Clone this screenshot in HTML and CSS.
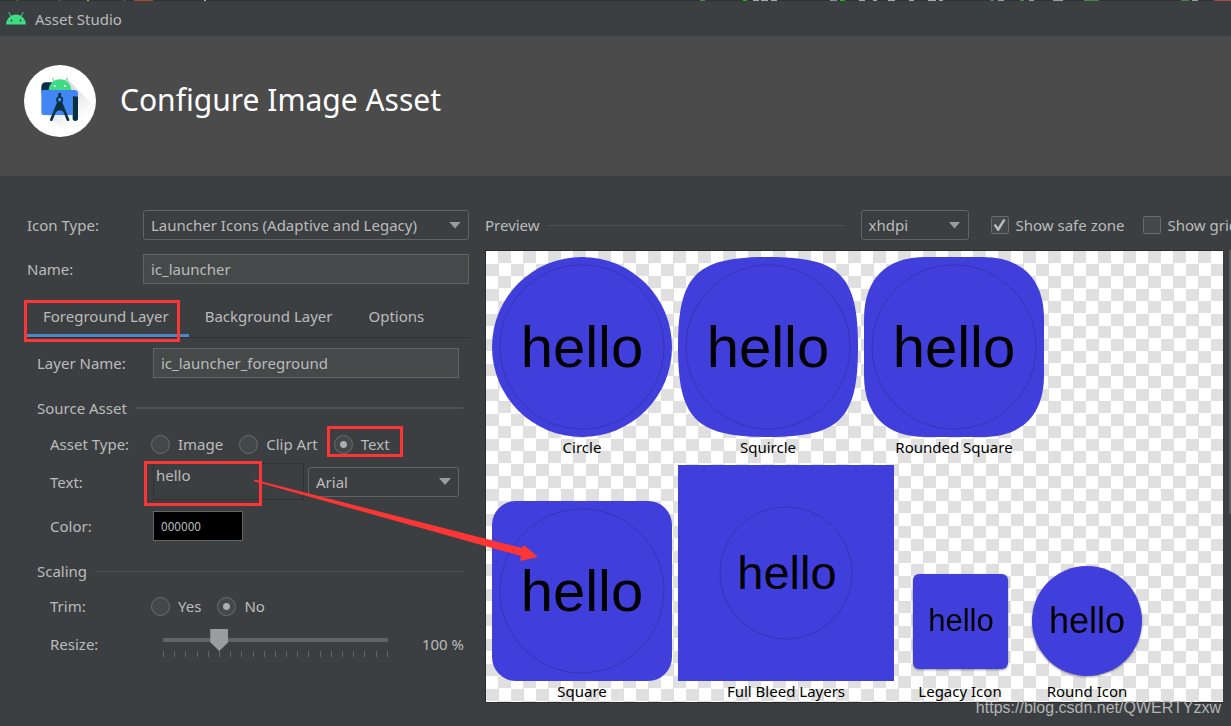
FILE: index.html
```
<!DOCTYPE html>
<html lang="en">
<head>
<meta charset="utf-8">
<title>Asset Studio</title>
<link rel="stylesheet" href="styles.css">
</head>
<body>
<div class="window">
  <svg class="backdrop-edge" height="1" aria-hidden="true">
    <rect x="17" width="1" height="1" fill="#77797b"/><rect x="59" width="1" height="1" fill="#77797b"/>
    <rect x="87" width="2" height="1" fill="#c9a06c"/><rect x="124" width="1" height="1" fill="#77797b"/>
    <rect x="134" width="19" height="1" fill="#a8491f"/><rect x="204" width="2" height="1" fill="#b5b7b8"/>
    <rect x="700" width="5" height="1" fill="#3c8a46"/><rect x="743" width="4" height="1" fill="#00c800"/>
    <rect x="753" width="6" height="1" fill="#a7a9aa"/><rect x="761" width="7" height="1" fill="#a7a9aa"/>
    <rect x="771" width="6" height="1" fill="#a7a9aa"/><rect x="830" width="7" height="1" fill="#8394a0"/>
    <rect x="840" width="5" height="1" fill="#00c800"/><rect x="859" width="6" height="1" fill="#a7a9aa"/>
    <rect x="873" width="4" height="1" fill="#a7a9aa"/><rect x="888" width="7" height="1" fill="#a7a9aa"/>
    <rect x="909" width="5" height="1" fill="#a7a9aa"/><rect x="928" width="8" height="1" fill="#a7a9aa"/>
    <rect x="939" width="4" height="1" fill="#a7a9aa"/><rect x="990" width="4" height="1" fill="#3c8a46"/>
    <rect x="998" width="6" height="1" fill="#9a9c9d"/><rect x="1020" width="4" height="1" fill="#3c8a46"/>
    <rect x="1029" width="5" height="1" fill="#9a9c9d"/><rect x="1053" width="10" height="1" fill="#9a9c9d"/>
    <rect x="1084" width="15" height="1" fill="#3c8a46"/><rect x="1181" width="8" height="1" fill="#3c8a46"/>
    <rect x="1192" width="6" height="1" fill="#9a9c9d"/><rect x="1214" width="17" height="1" fill="#b04545"/>
  </svg>

  <div class="titlebar">
    <svg class="titlebar-icon" viewBox="0 0 20 13" aria-hidden="true">
      <path d="M0 12.500C.3 7 4.500 2.500 10 2.500S19.700 7 20 12.500Z" fill="#3ddc84"/>
      <path d="M5 4.500 2.900.7M15 4.500 17.100.7" stroke="#3ddc84" stroke-linecap="round"/>
      <circle cx="5.500" cy="8.500" r=".9" fill="#3c3f41"/><circle cx="14.500" cy="8.500" r=".9" fill="#3c3f41"/>
    </svg>
    <span>Asset Studio</span>
  </div>

  <header class="banner">
    <svg class="logo" viewBox="0 0 216 216" aria-hidden="true">
      <defs>
        <linearGradient id="shade" gradientUnits="userSpaceOnUse" x1="100" y1="60" x2="175" y2="165">
          <stop offset="0" stop-color="#d4d4d4"/><stop offset="1" stop-color="#fff"/>
        </linearGradient>
      </defs>
      <circle cx="108" cy="108" r="108" fill="#fff"/>
      <path d="M130 42 207 119A100 100 0 0 1 125 205L70 150 110 80Z" fill="url(#shade)"/>
      <path d="M52 84V66Q52 52 66 52H94V75H62Z" fill="#073042"/>
      <path d="M52 75H150Q162 75 162 87V93H146V150H58Q52 150 52 144Z" fill="#4285f4"/>
      <path d="M146 96Q146 84 162 84V160Q162 168 154 168T146 160Z" fill="#073042"/>
      <path d="M162 95V86Q162 75 148 75H138V92Z" fill="#4285f4"/>
      <path d="M74 75C75 56 90 43 108 43S141 56 142 75Z" fill="#3ddc84"/>
      <path d="M91 50 85 39M124 50 130 39" stroke="#3ddc84" stroke-width="3" stroke-linecap="round"/>
      <circle cx="92" cy="63" r="3" fill="#fff"/><circle cx="123" cy="63" r="3" fill="#fff"/>
      <path d="M107 87V95M103 113 82 164M111 113 132 164" stroke="#073042" stroke-width="8" stroke-linecap="round"/>
      <path d="M107 108 92 144Q107 128 122 144Z" fill="#073042"/>
      <circle cx="107" cy="104" r="8" fill="#4285f4" stroke="#073042" stroke-width="5"/>
    </svg>
    <h1>Configure Image Asset</h1>
  </header>

  <main class="content">
    <form class="settings">
      <div class="row">
        <label for="icon-type">Icon Type:</label>
        <span class="select"><select id="icon-type"><option>Launcher Icons (Adaptive and Legacy)</option></select></span>
      </div>
      <div class="row row-name">
        <label for="name">Name:</label>
        <input class="field" id="name" type="text" value="ic_launcher">
      </div>

      <div class="tabs" role="tablist">
        <button class="tab tab-active" type="button" role="tab" aria-selected="true">Foreground Layer</button>
        <button class="tab" type="button" role="tab" aria-selected="false">Background Layer</button>
        <button class="tab" type="button" role="tab" aria-selected="false">Options</button>
      </div>

      <div class="layer">
        <div class="row">
          <label for="layer-name">Layer Name:</label>
          <input class="field" id="layer-name" type="text" value="ic_launcher_foreground">
        </div>

        <h2 class="legend legend-strong">Source Asset</h2>
        <div class="group">
          <div class="row row-asset">
            <span>Asset Type:</span>
            <div class="choices">
              <label><input type="radio" name="asset">Image</label>
              <label><input type="radio" name="asset">Clip Art</label>
              <label><input type="radio" name="asset" checked>Text</label>
            </div>
          </div>
          <div class="row row-text">
            <label for="text">Text:</label>
            <div class="pair">
              <textarea id="text" rows="1">hello</textarea>
              <span class="select"><select aria-label="Font"><option>Arial</option></select></span>
            </div>
          </div>
          <div class="row row-color">
            <label for="color">Color:</label>
            <input class="swatch" id="color" type="text" value="000000">
          </div>
        </div>

        <h2 class="legend">Scaling</h2>
        <div class="group">
          <div class="row row-trim">
            <span>Trim:</span>
            <div class="choices">
              <label><input type="radio" name="trim">Yes</label>
              <label><input type="radio" name="trim" checked>No</label>
            </div>
          </div>
          <div class="row row-resize">
            <label for="resize">Resize:</label>
            <div class="resize">
              <div class="slider">
                <input id="resize" type="range" min="0" max="400" value="100">
                <div class="ticks"><i></i><i></i><i></i><i></i><i></i><i></i><i></i><i></i><i></i><i></i><i></i><i></i><i></i><i></i><i></i><i></i><i></i><i></i><i></i><i></i><i></i></div>
              </div>
              <output for="resize">100 %</output>
            </div>
          </div>
        </div>
      </div>
    </form>

    <section class="preview">
      <div class="preview-bar">
        <h2 class="legend">Preview</h2>
        <span class="select select-density"><select aria-label="Density"><option>xhdpi</option></select></span>
        <label class="check"><input type="checkbox" checked>Show safe zone</label>
        <label class="check"><input type="checkbox">Show grid</label>
      </div>
      <div class="preview-body">
        <div class="canvas">
          <div class="shelf">
            <figure>
              <svg class="icon" viewBox="0 0 180 180"><circle cx="90" cy="90" r="90"/><circle class="zone" cx="90" cy="90" r="82"/><text x="90" y="110">hello</text></svg>
              <figcaption>Circle</figcaption>
            </figure>
            <figure>
              <svg class="icon" viewBox="0 0 180 180"><path d="M90 0C18 0 0 18 0 90S18 180 90 180 180 162 180 90 162 0 90 0Z"/><circle class="zone" cx="90" cy="90" r="82"/><text x="90" y="110">hello</text></svg>
              <figcaption>Squircle</figcaption>
            </figure>
            <figure>
              <svg class="icon" viewBox="0 0 180 180"><path d="M62 0H118C158 0 180 22 180 62V118C180 158 158 180 118 180H62C22 180 0 158 0 118V62C0 22 22 0 62 0Z"/><circle class="zone" cx="90" cy="90" r="82"/><text x="90" y="110">hello</text></svg>
              <figcaption>Rounded Square</figcaption>
            </figure>
          </div>
          <div class="shelf">
            <figure>
              <svg class="icon" viewBox="0 0 180 180"><rect width="180" height="180" rx="24"/><circle class="zone" cx="90" cy="90" r="82"/><text x="90" y="110">hello</text></svg>
              <figcaption>Square</figcaption>
            </figure>
            <figure>
              <svg class="icon icon-bleed" viewBox="0 0 216 216"><rect width="216" height="216"/><circle class="zone" cx="108" cy="108" r="66"/><text x="109" y="124">hello</text></svg>
              <figcaption>Full Bleed Layers</figcaption>
            </figure>
            <figure>
              <svg class="icon icon-legacy" viewBox="0 0 120 120"><rect x="13" y="13" width="95" height="95" rx="6"/><text x="61" y="70">hello</text></svg>
              <figcaption>Legacy Icon</figcaption>
            </figure>
            <figure>
              <svg class="icon icon-round" viewBox="0 0 122 122"><circle cx="61" cy="62" r="55"/><text x="61" y="74">hello</text></svg>
              <figcaption>Round Icon</figcaption>
            </figure>
          </div>
        </div>
        <div class="scrollbar"></div>
      </div>
    </section>
  </main>

  <svg class="marks" width="560" height="580" aria-hidden="true">
    <g fill="none" stroke="#fc3535" stroke-width="3">
      <rect x="25.500" y="301.500" width="153" height="39"/>
      <rect x="328.500" y="427.500" width="73" height="28"/>
      <rect x="145.500" y="462.500" width="115" height="42"/>
    </g>
    <path d="M254 479.500 522 548 524 545 538 557 520 561 521 556 254 481.200Z" fill="#fc3535"/>
  </svg>
  <div class="watermark">https://blog.csdn.net/QWERTYzxw</div>
</div>
</body>
</html>
```
FILE: styles.css
```
* { box-sizing: border-box; }

body {
  margin: 0;
  background: #3c3f41;
  color: #bbbbbb;
  font: 15px/22px "Noto Sans", "Open Sans", sans-serif;
}

h1, h2, figure { margin: 0; font-weight: 400; }

input, select, textarea, button {
  margin: 0;
  color: inherit;
  font: inherit;
}

.window {
  position: relative;
  display: flex;
  flex-direction: column;
  min-height: 100vh;
  overflow: hidden;
  border-bottom: 1px solid #35383a;
}

.backdrop-edge { display: block; width: 100%; background: #2f3234; }

.titlebar {
  display: flex;
  align-items: center;
  gap: 9px;
  height: 35px;
  padding: 0 6px;
}
.titlebar-icon { width: 20px; height: 13px; }

.banner {
  display: flex;
  align-items: center;
  gap: 24px;
  height: 140px;
  padding: 0 24px 10px;
  background: #4b4b4b;
  color: #fff;
}
.banner h1 { padding-bottom: 2px; font-size: 30px; line-height: 44px; }
.logo { width: 72px; height: 72px; }

.content {
  display: grid;
  grid-template-columns: 443px minmax(0, 1fr);
  gap: 15px;
  padding: 34px 0 23px 27px;
}

/* Form rows */
.row {
  display: grid;
  grid-template-columns: 116px minmax(0, 1fr);
  align-items: center;
}
.row-name { margin-top: 14px; }
.settings > .row { padding-right: 1px; }

.field {
  width: 100%;
  height: 30px;
  padding: 0 7px;
  border: 1px solid #646464;
  background: #45494a;
}

.select { display: grid; align-items: center; }
.select select {
  grid-area: 1 / 1;
  width: 100%;
  height: 30px;
  padding: 0 7px;
  appearance: none;
  border: 1px solid #646464;
  border-radius: 3px;
  background: #3c3f41;
}
.select::after {
  content: "";
  grid-area: 1 / 1;
  justify-self: end;
  width: 12px;
  height: 7px;
  margin-right: 8px;
  background: #9a9da0;
  clip-path: polygon(0 0, 100% 0, 50% 100%);
  pointer-events: none;
}

.tabs {
  display: flex;
  margin-top: 16px;
  border-bottom: 1px solid #323232;
}
.tab {
  height: 37px;
  padding: 0 20px 2px 16px;
  border: 0;
  border-bottom: 3px solid transparent;
  background: none;
}
.tab-active { border-bottom-color: #4a88c7; }

.layer { padding: 10px 11px 0 10px; }

.legend {
  display: flex;
  align-items: center;
  gap: 8px;
  margin: 19px -4px 0 0;
  font-size: 15px;
}
.legend::after {
  content: "";
  flex: 1;
  height: 1px;
  background: #515151;
}
.legend-strong::after { height: 2px; }

.group { padding-left: 13px; }
.group .row { grid-template-columns: 103px minmax(0, 1fr); }

.group .row-asset { margin-top: 14px; }
.group .row-text { margin-top: 8px; }
.group .row-color { margin-top: 11px; }
.group .row-trim { margin-top: 13px; }
.group .row-resize { margin-top: 12px; }

.choices { display: flex; gap: 16px; margin-left: -2px; }
.choices label { display: flex; align-items: center; gap: 8px; white-space: nowrap; }
.choices input {
  width: 19px;
  height: 19px;
  appearance: none;
  border: 1px solid #6b6b6b;
  border-radius: 50%;
  background: #43494a;
}
.choices input:checked { background: radial-gradient(circle, #adadad 3px, #43494a 4px); }

.pair {
  display: grid;
  grid-template-columns: 1fr 1fr;
  align-items: center;
  gap: 4px;
}
.pair textarea {
  width: 100%;
  height: 37px;
  padding: 0 2px;
  border: 1px solid #323232;
  outline: 0;
  background: none;
  resize: none;
  overflow: hidden;
}

.swatch {
  width: 90px;
  height: 30px;
  padding: 0 7px 2px;
  border: 1px solid #646464;
  background: #000;
  font: 12px/18px "Noto Sans CJK SC", sans-serif;
}

.resize {
  display: flex;
  justify-content: space-between;
  align-items: center;
  margin: 0 -5px 0 10px;
}
.slider { width: 225px; height: 30px; }
.slider input {
  display: block;
  width: 243px;
  height: 22px;
  margin: 0 -9px;
  appearance: none;
  background: linear-gradient(#646464, #646464) center / 225px 4px no-repeat;
}
.slider input::-webkit-slider-thumb {
  appearance: none;
  width: 18px;
  height: 22px;
  background: #9a9da0;
  clip-path: polygon(0 0, 100% 0, 100% 60%, 50% 100%, 0 60%);
}
.ticks { display: flex; justify-content: space-between; }
.ticks i { width: 1px; height: 6px; background: #646464; }

/* Preview */
.preview-bar { display: flex; align-items: center; margin-right: -7px; }
.preview-bar .legend { flex: 1; margin: 0 17px 0 0; }
.select-density { width: 108px; margin-right: 22px; }
.check {
  display: flex;
  align-items: center;
  gap: 7px;
  white-space: nowrap;
}
.check + .check { margin-left: 18px; }
.check input {
  display: grid;
  place-items: center;
  width: 18px;
  height: 18px;
  appearance: none;
  border: 1px solid #6b6b6b;
  border-radius: 2px;
  background: #43494a;
}
.check input:checked::before {
  content: "";
  width: 12px;
  height: 12px;
  background: #bbbbbb;
  clip-path: polygon(0 50%, 18% 42%, 38% 68%, 82% 0, 100% 8%, 44% 100%, 34% 100%);
}

.preview-body {
  display: flex;
  justify-content: space-between;
  margin-top: 10px;
}
.canvas {
  flex: 1;
  margin-right: 6px;
  padding: 6px 6px 0;
  border: solid #2b2b2b;
  border-width: 1px 0 1px 1px;
  background: conic-gradient(#e0e0e0 25%, #fff 0 50%, #e0e0e0 0 75%, #fff 0) 0 0 / 25px 25px;
  color: #000;
}
.shelf { display: flex; align-items: flex-end; gap: 6px; }
.shelf + .shelf { margin-top: 7px; }
figcaption { line-height: 21px; text-align: center; white-space: nowrap; }

.icon {
  display: block;
  width: 180px;
  fill: #413fdb;
  font: 58px "Liberation Sans", Arial, sans-serif;
}
.icon text { fill: #000; text-anchor: middle; }
.icon .zone { fill: none; stroke: #3633b6; }
.icon-bleed { width: 216px; font-size: 47px; }
.icon-legacy, .icon-round { filter: drop-shadow(0 1px 1px rgba(0, 0, 0, .4)); }
.icon-legacy { width: 120px; font-size: 31px; }
.icon-round { width: 122px; font-size: 36px; }

.scrollbar { width: 2px; height: 264px; background: #595b5d; }

/* Annotations drawn over the window */
.marks { position: absolute; top: 0; left: 0; pointer-events: none; }
.watermark {
  position: absolute;
  right: 10px;
  bottom: 7px;
  color: #b4b5b6;
  font: 16px/22px "Liberation Sans", Arial, sans-serif;
}
```
